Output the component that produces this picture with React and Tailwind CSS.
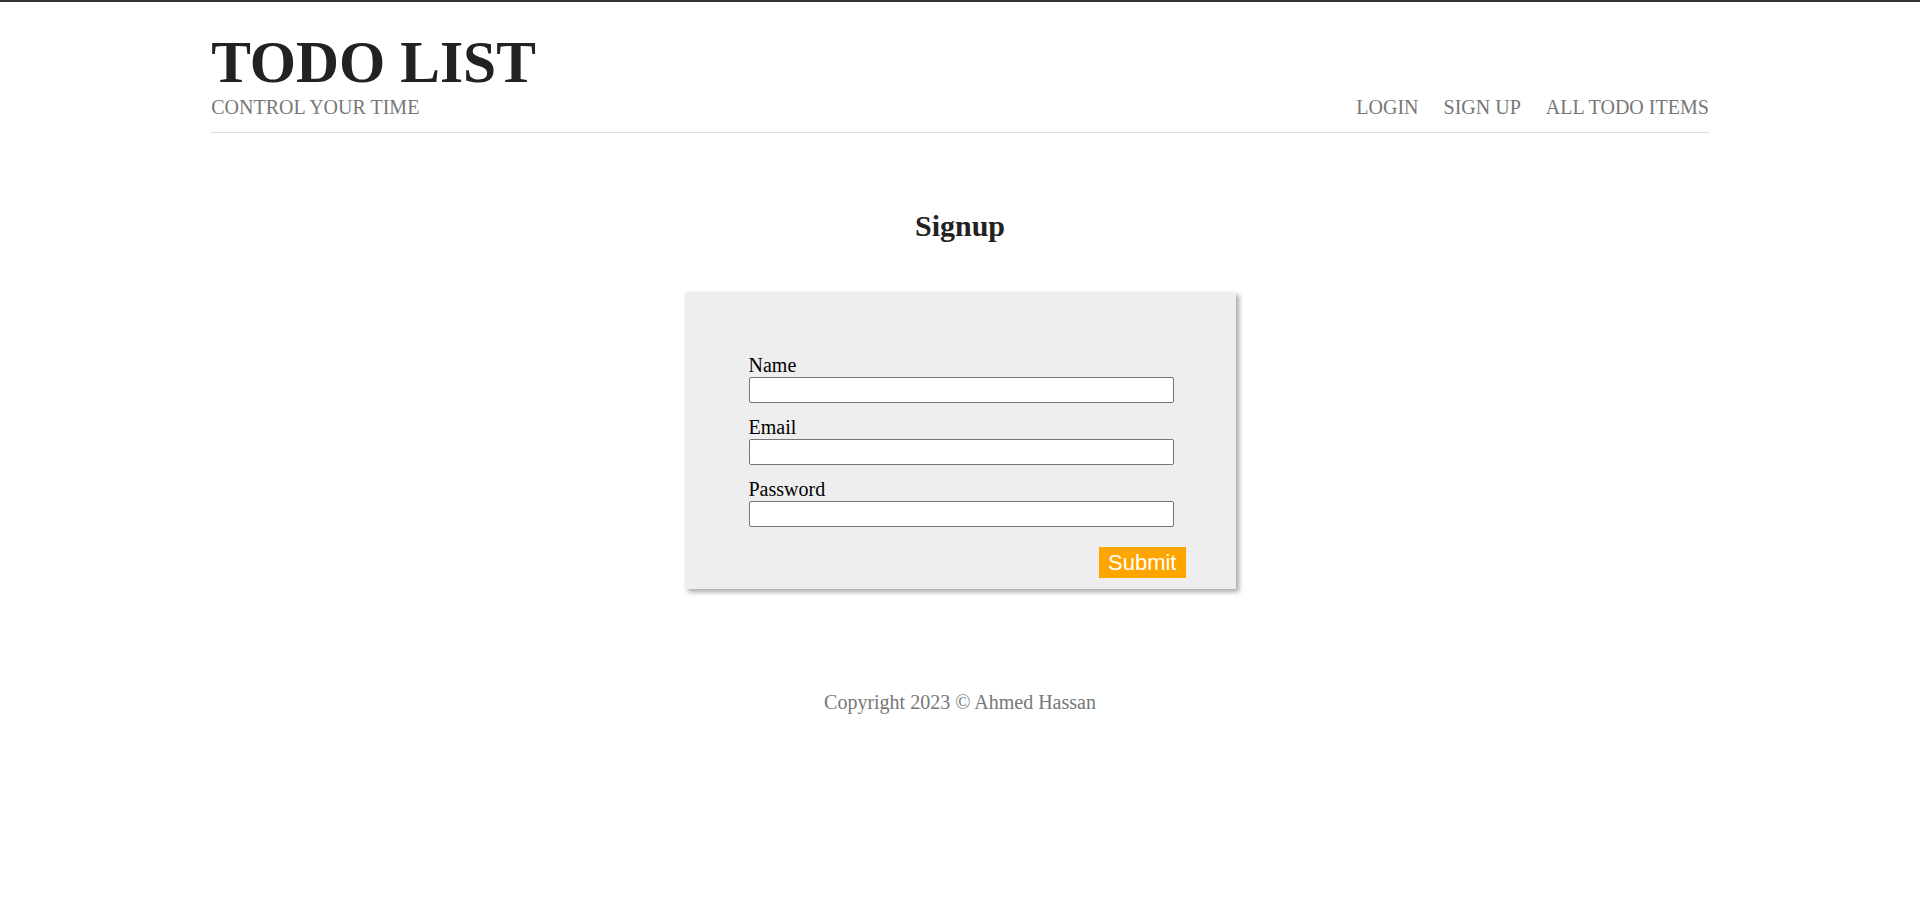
export default function App() {
  const serif = { fontFamily: '"Liberation Serif", "Times New Roman", serif' }

  return (
    <div className="min-h-[915px] bg-white border-t-2 border-[#333]" style={serif}>
      {/* header */}
      <header className="w-[78%] mx-auto pt-[30px] pb-[15px] flex justify-between items-end border-b border-[#ddd]">
        <div>
          <h1 className="text-[59.5px] leading-[60px] font-bold text-[#222]">TODO LIST</h1>
          <p className="mt-[5px] text-[20px] leading-none text-[#777]">CONTROL YOUR TIME</p>
        </div>
        <nav className="flex gap-[25px] text-[20px] leading-none text-[#777]">
          <a href="#">LOGIN</a>
          <a href="#">SIGN UP</a>
          <a href="#">ALL TODO ITEMS</a>
        </nav>
      </header>

      <main>
        <h2 className="mt-[78px] text-center text-[30px] leading-none font-bold text-[#222]">Signup</h2>

        <form
          className="mt-[51px] mx-auto w-[551px] bg-[#eee] pt-[62px] pb-[11px] pl-[64px] pr-[50px] flex flex-col shadow-[3px_3px_5px_rgba(0,0,0,0.35)]"
          onSubmit={e => e.preventDefault()}
        >
          <label className="block text-[20px] leading-[23px] text-black">Name</label>
          <input type="text" className="block w-[425px] h-[26px] bg-white border border-[#767676] rounded-[2px]" />

          <label className="block mt-[13px] text-[20px] leading-[23px] text-black">Email</label>
          <input type="email" className="block w-[425px] h-[26px] bg-white border border-[#767676] rounded-[2px]" />

          <label className="block mt-[13px] text-[20px] leading-[23px] text-black">Password</label>
          <input type="password" className="block w-[425px] h-[26px] bg-white border border-[#767676] rounded-[2px]" />

          <button
            type="submit"
            className="self-end mt-[20px] h-[31px] px-[9px] bg-[#ffa500] text-white text-[22px] leading-none"
            style={{ fontFamily: '"Liberation Sans", Arial, sans-serif' }}
          >
            Submit
          </button>
        </form>
      </main>

      <footer className="mt-[103px] text-center text-[20px] leading-none text-[#777]">
        Copyright 2023 © Ahmed Hassan
      </footer>
    </div>
  )
}
